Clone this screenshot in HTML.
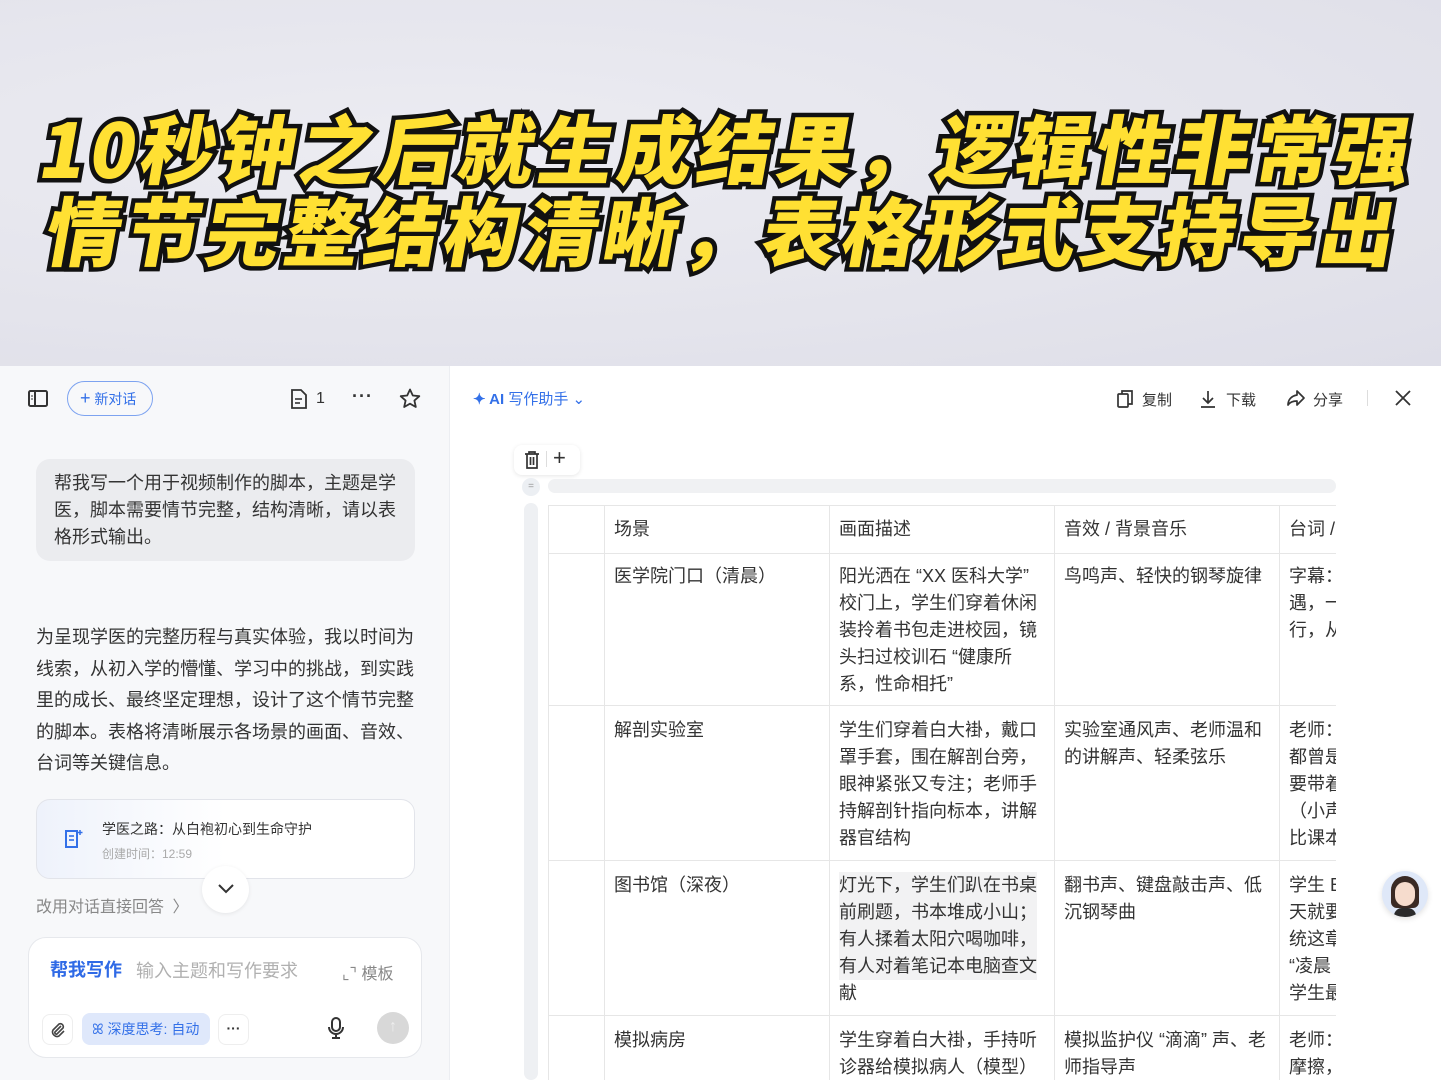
<!DOCTYPE html>
<html><head><meta charset="utf-8"><style>
*{margin:0;padding:0;box-sizing:border-box}
body{width:1441px;height:1080px;overflow:hidden;position:relative;background:#fff;font-family:"Liberation Sans","Noto Sans CJK SC",sans-serif;color:#333}
.ab{position:absolute}
#top{left:0;top:0;width:1441px;height:366px;background:radial-gradient(ellipse at 30% 40%,#ececf2,#e4e4ec 60%,#dedee8);}
.t{position:absolute;font-family:"Noto Sans CJK SC",sans-serif;font-weight:900;font-size:75px;color:#ffe033;-webkit-text-stroke:9px #111;paint-order:stroke fill;transform:skewX(-10deg);white-space:nowrap;letter-spacing:4.6px;line-height:1}
#left{left:0;top:366px;width:450px;height:714px;background:#f7f8fa;border-right:1px solid #eceef2}
.c{position:absolute;font-size:18px;line-height:27px;color:#333;white-space:nowrap}
.vl{position:absolute;top:505px;width:1px;height:575px;background:#e6e6e6}
.hl{position:absolute;left:548px;width:788px;height:1px;background:#e6e6e6}
</style></head><body>
<div id="top" class="ab"></div>
<div class="t" style="left:42px;top:108px">10秒钟之后就生成结果，逻辑性非常强</div>
<div class="t" style="left:48px;top:190px">情节完整结构清晰，表格形式支持导出</div>

<div id="left" class="ab"></div>
<svg class="ab" style="left:27px;top:389px" width="22" height="20" viewBox="0 0 22 20"><rect x="2" y="2" width="18" height="15" rx="1.5" fill="none" stroke="#333" stroke-width="2"/><line x1="8" y1="2" x2="8" y2="17" stroke="#333" stroke-width="2"/><line x1="4" y1="7" x2="6" y2="7" stroke="#333"/><line x1="4" y1="10" x2="6" y2="10" stroke="#333"/></svg>
<div class="ab" style="left:67px;top:381px;width:86px;height:35px;border:1.5px solid #7da3f0;border-radius:18px;color:#3370e8;font-size:14px;line-height:32px;padding-left:12px"><span style="font-size:18px">+</span> 新对话</div>
<svg class="ab" style="left:290px;top:389px" width="18" height="20" viewBox="0 0 18 20"><path d="M2 1h9l5 5v13H2z" fill="none" stroke="#333" stroke-width="1.8"/><line x1="5" y1="10" x2="12" y2="10" stroke="#333" stroke-width="1.6"/><line x1="5" y1="14" x2="10" y2="14" stroke="#333" stroke-width="1.6"/></svg>
<div class="ab" style="left:316px;top:390px;font-size:16px;color:#333">1</div>
<div class="ab" style="left:352px;top:386px;font-size:18px;font-weight:bold;color:#333;letter-spacing:1px">···</div>
<svg class="ab" style="left:399px;top:388px" width="22" height="21" viewBox="0 0 22 21"><path d="M11 1.5l2.8 6 6.5.7-4.9 4.4 1.4 6.4L11 15.7 5.2 19l1.4-6.4L1.7 8.2l6.5-.7z" fill="none" stroke="#333" stroke-width="1.8" stroke-linejoin="round"/></svg>
<div class="ab" style="left:36px;top:459px;width:379px;height:102px;background:#ebecef;border-radius:14px;padding:11px 18px;font-size:18px;line-height:27px;color:#333">帮我写一个用于视频制作的脚本，主题是学<br>医，脚本需要情节完整，结构清晰，请以表<br>格形式输出。</div>
<div class="ab" style="left:36px;top:622px;font-size:18px;line-height:31.5px;color:#333;white-space:nowrap">为呈现学医的完整历程与真实体验，我以时间为<br>线索，从初入学的懵懂、学习中的挑战，到实践<br>里的成长、最终坚定理想，设计了这个情节完整<br>的脚本。表格将清晰展示各场景的画面、音效、<br>台词等关键信息。</div>
<div class="ab" style="left:36px;top:799px;width:379px;height:80px;border:1px solid #e2e4ea;border-radius:14px;background:linear-gradient(90deg,#eef2fb,#fff 50%)"></div>
<svg class="ab" style="left:64px;top:829px" width="20" height="20" viewBox="0 0 20 20"><path d="M2 2h11v16H2z" fill="none" stroke="#3370e8" stroke-width="2"/><line x1="5" y1="7" x2="10" y2="7" stroke="#3370e8" stroke-width="1.6"/><line x1="5" y1="11" x2="10" y2="11" stroke="#3370e8" stroke-width="1.6"/><path d="M16 1v5M13.5 3.5h5" stroke="#3370e8" stroke-width="1.5"/></svg>
<div class="ab" style="left:102px;top:819px;font-size:14px;color:#333">学医之路：从白袍初心到生命守护</div>
<div class="ab" style="left:102px;top:845px;font-size:12px;color:#aaa">创建时间：12:59</div>
<div class="ab" style="left:202px;top:866px;width:47px;height:47px;border-radius:50%;background:#fff;box-shadow:0 1px 4px rgba(0,0,0,.08)"></div>
<svg class="ab" style="left:216px;top:882px" width="20" height="14" viewBox="0 0 20 14"><path d="M3 3l7 7 7-7" fill="none" stroke="#333" stroke-width="2"/></svg>
<div class="ab" style="left:36px;top:893px;font-size:16px;color:#888">改用对话直接回答 <span style="margin-left:4px">〉</span></div>
<div class="ab" style="left:28px;top:937px;width:394px;height:121px;background:#fff;border:1px solid #e6e8ec;border-radius:18px"></div>
<div class="ab" style="left:50px;top:956px;font-size:18px;font-weight:bold;color:#2f6ae6">帮我写作</div>
<div class="ab" style="left:136px;top:957px;font-size:18px;color:#b0b0b0">输入主题和写作要求</div>
<div class="ab" style="left:342px;top:960px;font-size:16px;color:#888">⌞⌝ 模板</div>
<div class="ab" style="left:42px;top:1014px;width:31px;height:31px;border:1px solid #eee;border-radius:8px"></div>
<svg class="ab" style="left:49px;top:1021px" width="17" height="17" viewBox="0 0 17 17"><path d="M12 5l-6 6a1.5 1.5 0 0 0 2 2l6-6a3 3 0 0 0-4-4l-6 6a4.5 4.5 0 0 0 6 6l5-5" fill="none" stroke="#444" stroke-width="1.6"/></svg>
<div class="ab" style="left:82px;top:1013px;width:128px;height:32px;background:#dfe8fb;border-radius:8px;color:#3370e8;font-size:14px;line-height:32px;padding-left:10px">ꕤ 深度思考: 自动</div>
<div class="ab" style="left:218px;top:1014px;width:31px;height:31px;border:1px solid #eee;border-radius:8px;text-align:center;line-height:26px;font-size:14px;font-weight:bold">···</div>
<svg class="ab" style="left:327px;top:1017px" width="18" height="22" viewBox="0 0 18 22"><rect x="5" y="1" width="8" height="13" rx="4" fill="none" stroke="#333" stroke-width="2"/><path d="M2 10a7 7 0 0 0 14 0M9 17v4M5 21h8" fill="none" stroke="#333" stroke-width="2"/></svg>
<div class="ab" style="left:377px;top:1012px;width:32px;height:32px;border-radius:50%;background:#d8d8d8;color:#eee;text-align:center;line-height:30px">↑</div>

<div class="ab" style="left:1336px;top:440px;width:105px;height:640px;background:#fff"></div>

<div class="ab" style="left:473px;top:388px;font-size:15px;color:#3370e8"><b>✦ AI</b> 写作助手 ⌄</div>
<svg class="ab" style="left:1116px;top:389px" width="18" height="20" viewBox="0 0 18 20"><rect x="2" y="5" width="10" height="13" rx="1" fill="none" stroke="#333" stroke-width="1.7"/><path d="M6 5V2h10v13h-4" fill="none" stroke="#333" stroke-width="1.7"/></svg>
<div class="ab" style="left:1142px;top:389px;font-size:15px;color:#333">复制</div>
<svg class="ab" style="left:1199px;top:389px" width="18" height="20" viewBox="0 0 18 20"><path d="M9 2v12M4 9l5 5 5-5M2 18h14" fill="none" stroke="#333" stroke-width="1.7"/></svg>
<div class="ab" style="left:1226px;top:389px;font-size:15px;color:#333">下载</div>
<svg class="ab" style="left:1286px;top:389px" width="20" height="18" viewBox="0 0 20 18"><path d="M11 2l7 7-7 7v-4c-4 0-7 1-9 4 0-5 3-9 9-10z" fill="none" stroke="#333" stroke-width="1.7" stroke-linejoin="round"/></svg>
<div class="ab" style="left:1313px;top:389px;font-size:15px;color:#333">分享</div>
<div class="ab" style="left:1367px;top:390px;width:1px;height:16px;background:#ddd"></div>
<svg class="ab" style="left:1395px;top:390px" width="16" height="16" viewBox="0 0 16 16"><path d="M1 1l14 14M15 1L1 15" stroke="#333" stroke-width="1.8"/></svg>

<div class="ab" style="left:514px;top:445px;width:66px;height:30px;background:#fff;border-radius:8px;box-shadow:0 1px 4px rgba(0,0,0,.1)"></div>
<svg class="ab" style="left:523px;top:451px" width="18" height="18" viewBox="0 0 18 18"><path d="M2 3h14M6 3V1h6v2M4 3v14h10V3M7.5 6v8M10.5 6v8" fill="none" stroke="#333" stroke-width="1.7"/></svg>
<div class="ab" style="left:546px;top:451px;width:1px;height:16px;background:#ddd"></div>
<div class="ab" style="left:553px;top:445px;font-size:22px;color:#333">+</div>
<div class="ab" style="left:522px;top:478px;width:18px;height:18px;border-radius:50%;background:#eceff3;color:#999;font-size:10px;text-align:center;line-height:18px">=</div>
<div class="ab" style="left:548px;top:479px;width:788px;height:14px;border-radius:7px;background:#f0f1f3"></div>
<div class="ab" style="left:524px;top:503px;width:14px;height:577px;border-radius:7px;background:#eef0f3"></div>

<div class="ab" style="left:839px;top:872px;width:198px;height:108px;background:#f2f2f3"></div>
<div class="hl" style="top:505px"></div>
<div class="hl" style="top:553px"></div>
<div class="hl" style="top:705px"></div>
<div class="hl" style="top:860px"></div>
<div class="hl" style="top:1015px"></div>
<div class="vl" style="left:548px"></div>
<div class="vl" style="left:604px"></div>
<div class="vl" style="left:829px"></div>
<div class="vl" style="left:1054px"></div>
<div class="vl" style="left:1279px"></div>

<div class="c" style="left:614px;top:516px">场景</div>
<div class="c" style="left:839px;top:516px">画面描述</div>
<div class="c" style="left:1064px;top:516px">音效 / 背景音乐</div>
<div class="c" style="left:1289px;top:516px;width:47px;overflow:hidden">台词 / 旁白</div>

<div class="c" style="left:614px;top:563px">医学院门口（清晨）</div>
<div class="c" style="left:839px;top:563px">阳光洒在 “XX 医科大学”<br>校门上，学生们穿着休闲<br>装拎着书包走进校园，镜<br>头扫过校训石 “健康所<br>系，性命相托”</div>
<div class="c" style="left:1064px;top:563px">鸟鸣声、轻快的钢琴旋律</div>
<div class="c" style="left:1289px;top:563px;width:47px;overflow:hidden">字幕：<br>遇，一<br>行，从</div>

<div class="c" style="left:614px;top:717px">解剖实验室</div>
<div class="c" style="left:839px;top:717px">学生们穿着白大褂，戴口<br>罩手套，围在解剖台旁，<br>眼神紧张又专注；老师手<br>持解剖针指向标本，讲解<br>器官结构</div>
<div class="c" style="left:1064px;top:717px">实验室通风声、老师温和<br>的讲解声、轻柔弦乐</div>
<div class="c" style="left:1289px;top:717px;width:47px;overflow:hidden">老师：<br>都曾是<br>要带着<br>（小声<br>比课本</div>

<div class="c" style="left:614px;top:872px">图书馆（深夜）</div>
<div class="c" style="left:839px;top:872px">灯光下，学生们趴在书桌<br>前刷题，书本堆成小山；<br>有人揉着太阳穴喝咖啡，<br>有人对着笔记本电脑查文<br>献</div>
<div class="c" style="left:1064px;top:872px">翻书声、键盘敲击声、低<br>沉钢琴曲</div>
<div class="c" style="left:1289px;top:872px;width:47px;overflow:hidden">学生 B<br>天就要<br>统这章<br>“凌晨<br>学生最</div>

<div class="c" style="left:614px;top:1027px">模拟病房</div>
<div class="c" style="left:839px;top:1027px">学生穿着白大褂，手持听<br>诊器给模拟病人（模型）</div>
<div class="c" style="left:1064px;top:1027px">模拟监护仪 “滴滴” 声、老<br>师指导声</div>
<div class="c" style="left:1289px;top:1027px;width:47px;overflow:hidden">老师：<br>摩擦，</div>

<div class="ab" style="left:1382px;top:871px;width:46px;height:46px;border-radius:50%;background:#dfe8f8;box-shadow:0 2px 6px rgba(0,0,0,.12);overflow:hidden">
<div class="ab" style="left:9px;top:5px;width:28px;height:32px;border-radius:14px 14px 6px 6px;background:#3a2a24"></div>
<div class="ab" style="left:13px;top:11px;width:20px;height:24px;border-radius:10px;background:#f6dccd"></div>
<div class="ab" style="left:12px;top:37px;width:22px;height:12px;border-radius:8px 8px 0 0;background:#2a2a2a"></div>
</div>
</body></html>
